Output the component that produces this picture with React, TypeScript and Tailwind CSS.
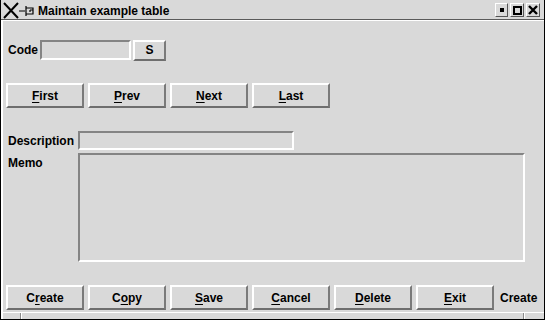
import React from 'react';

const font = { fontFamily: '"Liberation Sans", Arial, sans-serif' };

const Btn: React.FC<{ label: string; ul: number; w?: string; h?: string }> = ({ label, ul, w = 'w-[78px]', h = 'h-[25px]' }) => (
  <button
    className={`${w} ${h} shrink-0 bg-[#d9d9d9] border-2 border-t-white border-l-white border-b-[#6e6e6e] border-r-[#7a7a7a] text-[12px] font-bold text-black flex items-center justify-center leading-none`}
  >
    {label.slice(0, ul)}
    <span className="underline underline-offset-2">{label[ul]}</span>
    {label.slice(ul + 1)}
  </button>
);

const Field: React.FC<{ w: string; h: string }> = ({ w, h }) => (
  <div className={`${w} ${h} shrink-0 bg-[#d9d9d9] border-2 border-t-[#848484] border-l-[#848484] border-b-white border-r-white`} />
);

export default function App() {
  return (
    <div className="w-[545px] h-[320px] overflow-hidden bg-[#d9d9d9] border-x border-b border-black flex flex-col text-black" style={font}>
      {/* title bar */}
      <div className="h-[21px] shrink-0 flex items-center border-b border-b-white relative">
        <div className="absolute left-0 right-0 bottom-0 h-px bg-[#5a5a5a]" />
        <svg width="36" height="18" viewBox="0 0 36 18" className="ml-[1px] shrink-0">
          <path d="M2 2 L16 17 M16 2 L2 17" stroke="black" strokeWidth="2" fill="none" />
          <path d="M17 10 H23 M24 5 V15 M24 7 H31 V13 H24 M28 9 H31 M28 9 V11" stroke="black" strokeWidth="1.2" fill="none" />
        </svg>
        <span className="text-[12px] font-bold leading-none mt-[1px]">Maintain example table</span>
        <div className="ml-auto mr-[4px] flex gap-[2px] items-center">
          <div className="w-[13px] h-[14px] border border-t-white border-l-white border-b-[#555] border-r-[#555] flex items-center justify-center">
            <div className="w-[4px] h-[4px] bg-black" />
          </div>
          <div className="w-[14px] h-[14px] border border-t-white border-l-white border-b-[#555] border-r-[#555] flex items-center justify-center">
            <div className="w-[9px] h-[9px] border-2 border-black" />
          </div>
          <div className="w-[14px] h-[14px] border border-t-white border-l-white border-b-[#555] border-r-[#555] flex items-center justify-center">
            <svg width="10" height="10" viewBox="0 0 10 10">
              <path d="M1 1 L9 9 M9 1 L1 9" stroke="black" strokeWidth="2.4" />
            </svg>
          </div>
        </div>
      </div>

      <div className="flex-1 flex flex-col border-l-2 border-l-white">
        {/* code row */}
        <div className="mt-[19px] h-[20px] flex items-center">
          <span className="ml-[5px] w-[32px] text-[12px] font-bold">Code</span>
          <Field w="w-[91px]" h="h-[20px]" />
          <div className="ml-[2px]">
            <Btn label="S" ul={-1} w="w-[33px]" h="h-[21px]" />
          </div>
        </div>

        {/* nav row */}
        <div className="mt-[23px] flex gap-[4px] ml-[3px]">
          <Btn label="First" ul={0} />
          <Btn label="Prev" ul={0} />
          <Btn label="Next" ul={0} />
          <Btn label="Last" ul={0} />
        </div>

        {/* description */}
        <div className="mt-[23px] h-[19px] flex items-center">
          <span className="ml-[5px] w-[70px] text-[12px] font-bold">Description</span>
          <Field w="w-[216px]" h="h-[19px]" />
        </div>

        {/* memo */}
        <div className="mt-[3px] flex items-start">
          <span className="ml-[5px] w-[70px] text-[12px] font-bold mt-[1px]">Memo</span>
          <Field w="w-[447px]" h="h-[109px]" />
        </div>

        {/* bottom buttons */}
        <div className="mt-[23px] flex items-center gap-[4px] ml-[3px]">
          <Btn label="Create" ul={1} />
          <Btn label="Copy" ul={1} />
          <Btn label="Save" ul={0} />
          <Btn label="Cancel" ul={0} />
          <Btn label="Delete" ul={0} />
          <Btn label="Exit" ul={0} />
          <span className="ml-[2px] text-[12px] font-bold">Create</span>
        </div>

        {/* status bar */}
        <div className="mt-[2px] flex-1 flex border-t border-t-white">
          <div className="w-[18px] border-r border-r-[#8a8a8a]" />
          <div className="w-px bg-white" />
          <div className="flex-1 border-r border-r-[#8a8a8a]" />
          <div className="w-px bg-white" />
          <div className="w-[19px]" />
        </div>
      </div>
    </div>
  );
}
